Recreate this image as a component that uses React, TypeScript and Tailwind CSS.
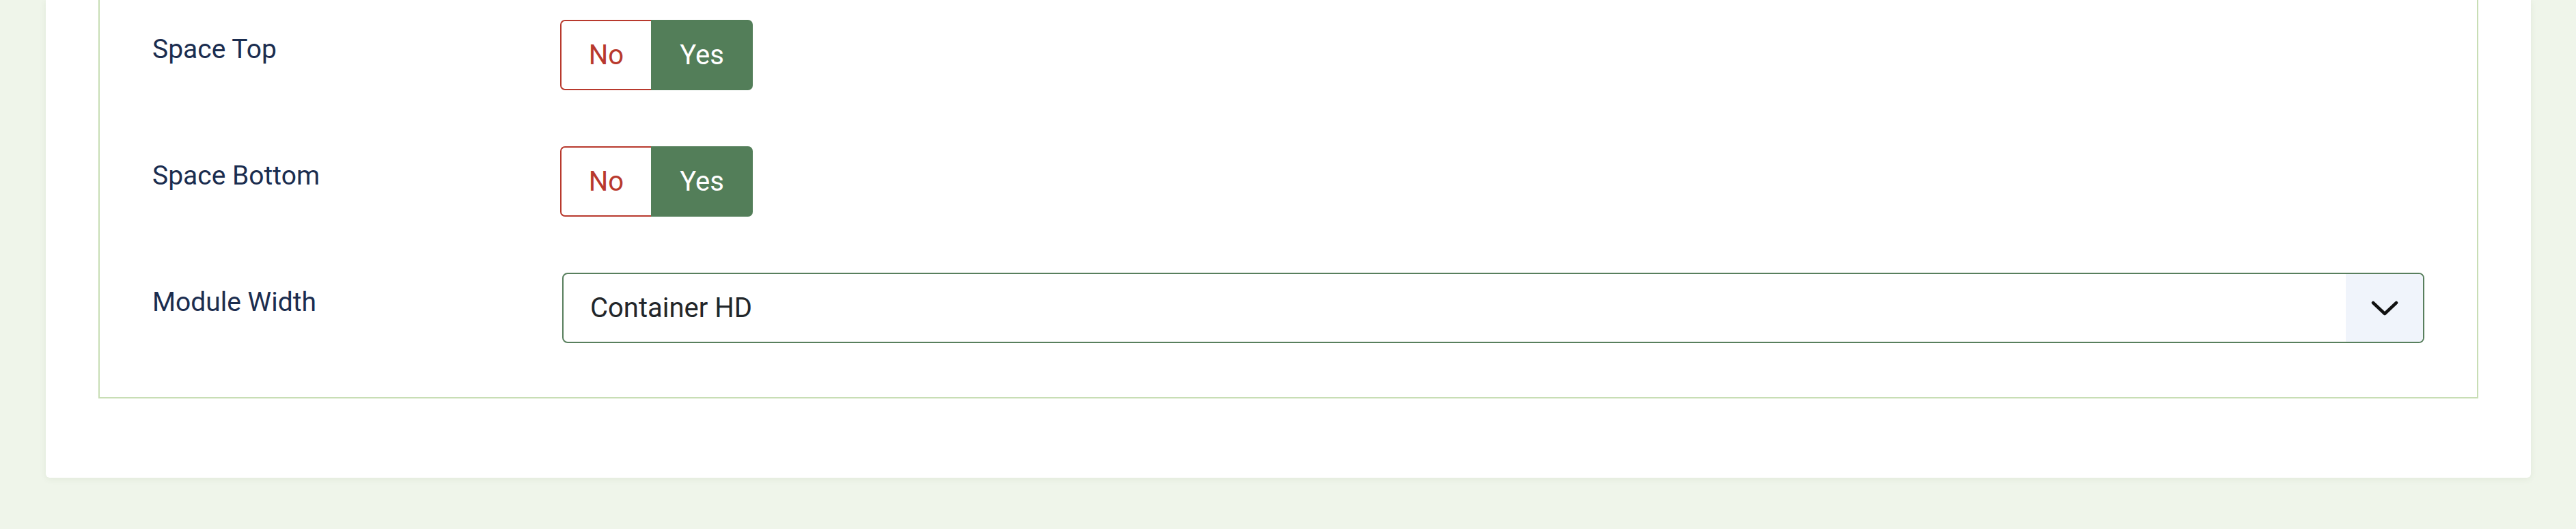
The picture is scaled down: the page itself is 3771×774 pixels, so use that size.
import React from 'react';

const labelCls = 'w-[597px] shrink-0 pt-[14px] text-[39px] leading-[1.5] text-[#1b2d4f]';

const Toggle: React.FC = () => (
  <div className="flex h-[103px] text-[40px]">
    <div className="flex w-[133px] items-center justify-center rounded-l-[7px] border-2 border-r-0 border-[#b8392d] bg-white text-[#b8392d]">
      No
    </div>
    <div className="flex w-[149px] items-center justify-center rounded-r-[7px] bg-[#537e59] text-white">
      Yes
    </div>
  </div>
);

const App: React.FC = () => {
  return (
    <div className="min-h-[774px] w-[3771px] bg-[#eff5ea] font-['Roboto',sans-serif]">
      <div className="ml-[67px] w-[3638px] rounded-b-[6px] bg-white px-[77px] pb-[116px] shadow-[0_2px_10px_rgba(60,90,40,0.08)]">
        <div className="flex flex-col gap-[82px] border-x-2 border-b-2 border-[#c8deb5] px-[77px] pt-[29px] pb-[79px]">
          <div className="flex">
            <label className={labelCls}>Space Top</label>
            <Toggle />
          </div>
          <div className="flex">
            <label className={labelCls}>Space Bottom</label>
            <Toggle />
          </div>
          <div className="flex">
            <label className={labelCls}>Module Width</label>
            <div className="ml-[3px] flex h-[103px] flex-1 overflow-hidden rounded-[8px] border-2 border-[#587f5d] bg-white">
              <div className="flex flex-1 items-center pl-[39px] text-[40px] text-[#22262a]">Container HD</div>
              <div className="flex w-[113px] items-center justify-center bg-[#f0f4fb]">
                <svg width="40" height="26" viewBox="0 0 40 26" fill="none">
                  <path d="M3 5 L20 21 L37 5" stroke="#111" strokeWidth="4.5" strokeLinecap="round" strokeLinejoin="round" />
                </svg>
              </div>
            </div>
          </div>
        </div>
      </div>
    </div>
  );
};

export default App;
